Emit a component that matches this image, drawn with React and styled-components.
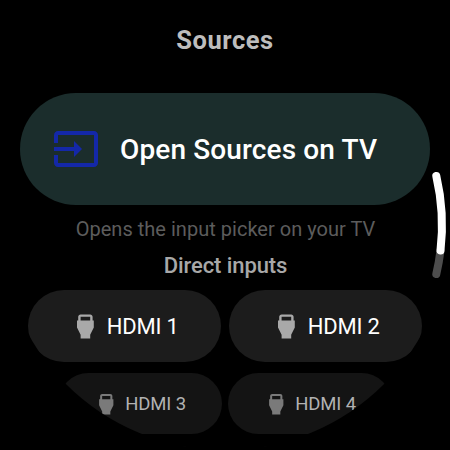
import React from 'react'
import styled, {createGlobalStyle} from 'styled-components'

const GlobalStyle = createGlobalStyle`
    *{
        box-sizing: border-box;
    }
    body{
        margin: 0;
        background: #000;
        font-family: Roboto, "Liberation Sans", sans-serif;
    }
`;

const inputs = ["HDMI 1", "HDMI 2"]
const lowerInputs = ["HDMI 3", "HDMI 4"]

const InputIcon = () => (
    <svg width="48" height="48" viewBox="0 0 24 24" fill="currentColor">
        <path d="M21 3.01H3c-1.1 0-2 .9-2 2V9h2V4.99h18v14.03H3V15H1v4.01c0 1.1.9 1.98 2 1.98h18c1.1 0 2-.88 2-1.98v-14c0-1.11-.9-2-2-2zM11 16l4-4-4-4v3H1v2h10v3z"/>
    </svg>
)

const HdmiIcon = () => (
    <svg viewBox="0 0 24 24" fill="currentColor">
        <path fillRule="evenodd" d="M18 7V4c0-1.1-.9-2-2-2H8c-1.1 0-2 .9-2 2v3H5v6l3 6v3h8v-3l3-6V7h-1zM8 4h8v3H8V4z"/>
    </svg>
)

// Curved scroll position along the right edge
const ScrollArc = () => (
    <Arc width="450" height="450" viewBox="0 0 450 450" fill="none" strokeWidth="8" strokeLinecap="round">
        <path stroke="#4d4d4d" d="M440.5 250.5A217 217 0 0 1 436.3 274"/>
        <path stroke="#fff" d="M436.3 176A217 217 0 0 1 440.5 250.5"/>
    </Arc>
)

const App = () => {
    return (
        <Watch>
            <GlobalStyle/>
            <Title>Sources</Title>
            <OpenButton>
                <InputIcon/>
                <span>Open Sources on TV</span>
            </OpenButton>
            <Hint>Opens the input picker on your TV</Hint>
            <Subtitle>Direct inputs</Subtitle>
            <Row>
                {inputs.map(name => (
                    <Chip key={name}><HdmiIcon/><span>{name}</span></Chip>
                ))}
            </Row>
            <Row $small>
                {lowerInputs.map(name => (
                    <Chip $small key={name}><HdmiIcon/><span>{name}</span></Chip>
                ))}
            </Row>
            <Row $last>
                <NextChip/>
                <NextChip/>
            </Row>
            <ScrollArc/>
        </Watch>
    )
}

const Watch = styled.div`
    position: relative;
    display: flex;
    flex-direction: column;
    align-items: center;
    width: 450px;
    height: 450px;
    overflow: hidden;
    border-radius: 50%;
    background: #000;
    white-space: nowrap;
`;

const Title = styled.h1`
    margin: 24px 0 0;
    font-size: 25.5px;
    line-height: 32px;
    font-weight: 700;
    letter-spacing: 0.55px;
    color: #bdbdbd;
`;

const OpenButton = styled.button`
    display: flex;
    flex-shrink: 0;
    align-items: center;
    gap: 20px;
    width: 410px;
    height: 112px;
    margin: 37px 0 0;
    padding: 0 32px;
    border: none;
    border-radius: 56px;
    background: #1b2d2c;
    font-family: inherit;
    font-size: 28px;
    font-weight: 500;
    letter-spacing: 0.13px;
    color: #fff;
    svg{
        flex-shrink: 0;
        color: #1428a8;
    }
`;

const Hint = styled.p`
    margin: 12px 0 0;
    padding-left: 1px;
    font-size: 20px;
    line-height: 24px;
    letter-spacing: 0.02px;
    color: #5c5c5c;
`;

const Subtitle = styled.h2`
    margin: 11px 0 0;
    padding-left: 1px;
    font-size: 22px;
    line-height: 28px;
    font-weight: 500;
    letter-spacing: -0.08px;
    color: #a8a8a8;
`;

const Row = styled.div`
    display: flex;
    flex-shrink: 0;
    gap: ${props => props.$last ? "48px" : props.$small ? "6px" : "8px"};
    margin-top: ${props => props.$small ? "11.4px" : props.$last ? "12px" : "10px"};
`;

const Chip = styled.button`
    display: flex;
    align-items: center;
    gap: ${props => props.$small ? "6.8px" : "7.5px"};
    width: ${props => props.$small ? "164px" : "193px"};
    height: ${props => props.$small ? "61px" : "72px"};
    padding: 0 0 0 ${props => props.$small ? "36px" : "42.5px"};
    border: none;
    border-radius: 36px;
    background: ${props => props.$small ? "#141414" : "#1c1c1c"};
    font-family: inherit;
    font-size: ${props => props.$small ? "18.5px" : "22px"};
    letter-spacing: ${props => props.$small ? "-0.15px" : "-0.2px"};
    color: ${props => props.$small ? "#b2b2b2" : "#fff"};
    svg{
        flex-shrink: 0;
        width: ${props => props.$small ? "24.5px" : "28.8px"};
        height: ${props => props.$small ? "24.5px" : "28.8px"};
        color: ${props => props.$small ? "#7a7a7a" : "#a9a9a9"};
    }
`;

const NextChip = styled.div`
    width: 110px;
    height: 40px;
    border-radius: 20px;
    background: #0d0d0d;
`;

const Arc = styled.svg`
    position: absolute;
    top: 0;
    left: 0;
    pointer-events: none;
`;

export default App
